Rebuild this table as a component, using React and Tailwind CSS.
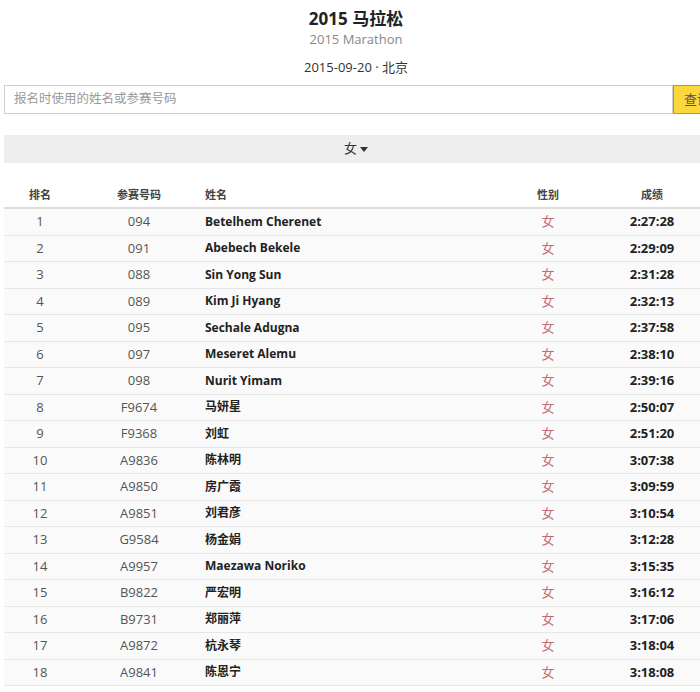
const rows = [
  ['1', '094', 'Betelhem Cherenet', '2:27:28'],
  ['2', '091', 'Abebech Bekele', '2:29:09'],
  ['3', '088', 'Sin Yong Sun', '2:31:28'],
  ['4', '089', 'Kim Ji Hyang', '2:32:13'],
  ['5', '095', 'Sechale Adugna', '2:37:58'],
  ['6', '097', 'Meseret Alemu', '2:38:10'],
  ['7', '098', 'Nurit Yimam', '2:39:16'],
  ['8', 'F9674', '马妍星', '2:50:07'],
  ['9', 'F9368', '刘虹', '2:51:20'],
  ['10', 'A9836', '陈林明', '3:07:38'],
  ['11', 'A9850', '房广霞', '3:09:59'],
  ['12', 'A9851', '刘君彦', '3:10:54'],
  ['13', 'G9584', '杨金娟', '3:12:28'],
  ['14', 'A9957', 'Maezawa Noriko', '3:15:35'],
  ['15', 'B9822', '严宏明', '3:16:12'],
  ['16', 'B9731', '郑丽萍', '3:17:06'],
  ['17', 'A9872', '杭永琴', '3:18:04'],
  ['18', 'A9841', '陈恩宁', '3:18:08'],
];

const cols = 'grid grid-cols-[72px_126px_286px_120px_100px]';

export default function App() {
  return (
    <div
      className="w-[700px] h-[692px] overflow-hidden bg-white text-[#333]"
      style={{ fontFamily: '"Open Sans", "Noto Sans", "Noto Sans CJK SC", sans-serif' }}
    >
      <div className="ml-[4px] w-[704px]">
        {/* heading */}
        <div className="pt-[8px] text-center">
          <h1 className="text-[17px] leading-[22px] font-bold text-[#222]">2015 马拉松</h1>
          <p className="text-[13px] leading-[18px] text-[#888]">2015 Marathon</p>
          <p className="mt-[10px] text-[13px] leading-[18px] text-[#333]">2015-09-20 · 北京</p>
        </div>

        {/* search */}
        <div className="mt-[9px] flex h-[29px]">
          <div className="w-[669px] shrink-0 h-full border border-[#cfcfcf] flex items-center pl-[9px] text-[12.5px] text-[#999]">
            报名时使用的姓名或参赛号码
          </div>
          <button className="w-[50px] shrink-0 h-full bg-[#fcd73c] border border-[#b89a1c] text-[13px] text-[#555] text-left pl-[10px]">
            查询
          </button>
        </div>

        {/* gender filter */}
        <div className="mt-[21px] h-[28px] bg-[#eeeeee] flex items-center justify-center text-[13px] text-[#333]">
          <span>女</span>
          <svg className="ml-[3px] mt-[1px]" width="8" height="5" viewBox="0 0 8 5">
            <path d="M0 0 L8 0 L4 5 Z" fill="#333" />
          </svg>
        </div>

        {/* table */}
        <div className="mt-[21px]">
          <div className={`${cols} h-[25px] items-center border-b-2 border-[#dedede] text-[11px] font-semibold text-[#444]`}>
            <div className="text-center">排名</div>
            <div className="text-center">参赛号码</div>
            <div className="pl-[3px]">姓名</div>
            <div className="text-center">性别</div>
            <div className="text-center pr-[12px]">成绩</div>
          </div>
          {rows.map((r) => (
            <div
              key={r[0]}
              className={`${cols} h-[26.5px] items-center border-b border-[#e6e6e6] bg-[#fafafa] text-[13px]`}
            >
              <div className="text-center text-[#555]">{r[0]}</div>
              <div className="text-center text-[#555]">{r[1]}</div>
              <div className="pl-[3px] text-[12px] font-bold text-[#222]">{r[2]}</div>
              <div className="text-center text-[#c46a78]">女</div>
              <div className="text-center pr-[12px] font-bold text-[#222]">{r[3]}</div>
            </div>
          ))}
        </div>
      </div>
    </div>
  );
}
